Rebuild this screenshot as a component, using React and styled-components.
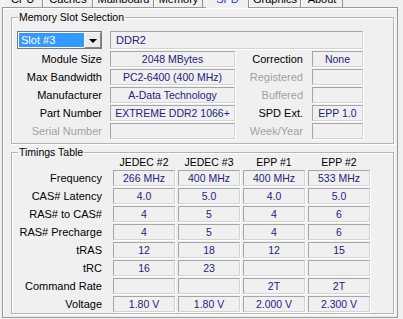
import React from 'react';
import styled, { createGlobalStyle } from 'styled-components';

const GlobalStyle = createGlobalStyle`
  html, body {
    margin: 0;
    padding: 0;
    background: #f0f0f0;
    overflow: hidden;
  }
  body {
    font-family: "Liberation Sans", Arial, sans-serif;
    font-size: 11px;
    color: #000;
  }
  * { box-sizing: border-box; }
`;

const Window = styled.div`
  width: 403px;
  height: 319px;
  overflow: hidden;
  background: #f0f0f0;
`;

const TabStrip = styled.div`
  display: flex;
  align-items: flex-end;
  height: 7px;
  padding-left: 2px;
  position: relative;
  z-index: 1;
`;

const Tab = styled.div`
  flex: none;
  width: ${p => p.w}px;
  margin-left: ${p => p.ml || 0}px;
  height: ${p => (p.active ? 20 : 17)}px;
  margin-bottom: ${p => (p.active ? -1 : 0)}px;
  padding-top: ${p => (p.active ? 5 : 3)}px;
  line-height: 13px;
  text-align: center;
  white-space: nowrap;
  background: #f0f0f0;
  color: ${p => (p.active ? '#1c3fc8' : '#000')};
  border-left: 1px solid #fff;
  border-right: 1px solid #8e8e8e;
`;

const Panel = styled.div`
  margin-left: 2px;
  width: 396px;
  height: 311px;
  border: 1px solid #9a9a9a;
  box-shadow: inset 1px 1px 0 #fff;
  padding: 9px 4px 0 8px;
`;

const Group = styled.div`
  position: relative;
  width: 383px;
  margin-top: ${p => p.mt || 0}px;
  border: 1px solid #b4b4b4;
  box-shadow: 1px 1px 0 #fff, inset 1px 1px 0 #fff;
`;

const Legend = styled.span`
  position: absolute;
  top: -7px;
  left: 6px;
  padding: 0 1px;
  font-size: 10.5px;
  line-height: 13px;
  background: #f0f0f0;
`;

const SlotGrid = styled.div`
  display: grid;
  grid-template-columns: 96px 125px 77px 51px;
  grid-template-rows: 18px repeat(5, 16px);
  row-gap: 2px;
  padding: 13px 0 4px 2px;
`;

const TimingGrid = styled.div`
  display: grid;
  grid-template-columns: 96px repeat(4, 62px);
  grid-template-rows: 14px repeat(8, 16px);
  column-gap: 3px;
  row-gap: 2px;
  padding: 1px 0 1px 2px;
`;

const Label = styled.div`
  text-align: right;
  padding-right: ${p => p.pr || 8}px;
  line-height: 16px;
  white-space: nowrap;
  color: ${p => (p.disabled ? '#a2a2a2' : '#000')};
`;

const ColHead = styled.div`
  text-align: center;
  font-size: 10.5px;
  line-height: 14px;
  padding-top: 1px;
  white-space: nowrap;
`;

const Box = styled.div`
  grid-column: ${p => p.span || 'auto'};
  height: ${p => p.h || 16}px;
  border: 1px solid;
  border-color: #a6a6a6 #d4d4d4 #d4d4d4 #a6a6a6;
  box-shadow: 1px 1px 0 #fff;
  font-size: ${p => (p.left ? 11 : 10.5)}px;
  line-height: ${p => (p.h || 16) - 2}px;
  text-align: ${p => (p.left ? 'left' : 'center')};
  padding-left: ${p => (p.left ? 5 : 0)}px;
  color: #23237f;
  white-space: nowrap;
  overflow: hidden;
`;

const Combo = styled.div`
  display: flex;
  height: 18px;
  margin: 0 8px 0 3px;
  border: 1px solid #7a7a7a;
  background: #fff;
  padding: 1px 0 1px 1px;
`;

const ComboText = styled.div`
  flex: 1;
  background: #3399ff;
  color: #fff;
  line-height: 14px;
  padding-left: 2px;
`;

const ComboButton = styled.div`
  width: 17px;
  margin-top: -1px;
  margin-bottom: -1px;
  display: flex;
  align-items: center;
  justify-content: center;
  background: #ececec;
  border: 1px solid;
  border-color: #fff #8a8a8a #8a8a8a #fff;
`;

const Arrow = styled.div`
  width: 0;
  height: 0;
  border-left: 4px solid transparent;
  border-right: 4px solid transparent;
  border-top: 4px solid #000;
  margin-top: 1px;
`;

const tabs = [
  { name: 'CPU', w: 41 },
  { name: 'Caches', w: 50 },
  { name: 'Mainboard', w: 61 },
  { name: 'Memory', w: 49 },
  { name: 'SPD', w: 43, ml: 3, active: true },
  { name: 'Graphics', w: 52 },
  { name: 'About', w: 42 },
];

const slotRows = [
  ['Module Size', '2048 MBytes', 'Correction', 'None'],
  ['Max Bandwidth', 'PC2-6400 (400 MHz)', 'Registered', '', false, true],
  ['Manufacturer', 'A-Data Technology', 'Buffered', '', false, true],
  ['Part Number', 'EXTREME DDR2 1066+', 'SPD Ext.', 'EPP 1.0'],
  ['Serial Number', '', 'Week/Year', '', true, true],
];

const columns = ['JEDEC #2', 'JEDEC #3', 'EPP #1', 'EPP #2'];

const timings = [
  ['Frequency', '266 MHz', '400 MHz', '400 MHz', '533 MHz'],
  ['CAS# Latency', '4.0', '5.0', '4.0', '5.0'],
  ['RAS# to CAS#', '4', '5', '4', '6'],
  ['RAS# Precharge', '4', '5', '4', '6'],
  ['tRAS', '12', '18', '12', '15'],
  ['tRC', '16', '23', '', ''],
  ['Command Rate', '', '', '2T', '2T'],
  ['Voltage', '1.80 V', '1.80 V', '2.000 V', '2.300 V'],
];

export default function App() {
  return (
    <Window>
      <GlobalStyle />
      <TabStrip>
        {tabs.map(t => (
          <Tab key={t.name} w={t.w} ml={t.ml} active={t.active}>{t.name}</Tab>
        ))}
      </TabStrip>
      <Panel>
        <Group mt={0}>
          <Legend>Memory Slot Selection</Legend>
          <SlotGrid>
            <Combo>
              <ComboText>Slot #3</ComboText>
              <ComboButton><Arrow /></ComboButton>
            </Combo>
            <Box span="2 / 5" h={18} left>DDR2</Box>
            {slotRows.map(([l1, v1, l2, v2, dis1, dis2]) => (
              <React.Fragment key={l1}>
                <Label disabled={dis1}>{l1}</Label>
                <Box>{v1}</Box>
                <Label pr={9} disabled={dis2}>{l2}</Label>
                <Box>{v2}</Box>
              </React.Fragment>
            ))}
          </SlotGrid>
        </Group>
        <Group mt={8}>
          <Legend>Timings Table</Legend>
          <TimingGrid>
            <div />
            {columns.map(c => <ColHead key={c}>{c}</ColHead>)}
            {timings.map(([label, ...vals]) => (
              <React.Fragment key={label}>
                <Label>{label}</Label>
                {vals.map((v, i) => <Box key={i}>{v}</Box>)}
              </React.Fragment>
            ))}
          </TimingGrid>
        </Group>
      </Panel>
    </Window>
  );
}
